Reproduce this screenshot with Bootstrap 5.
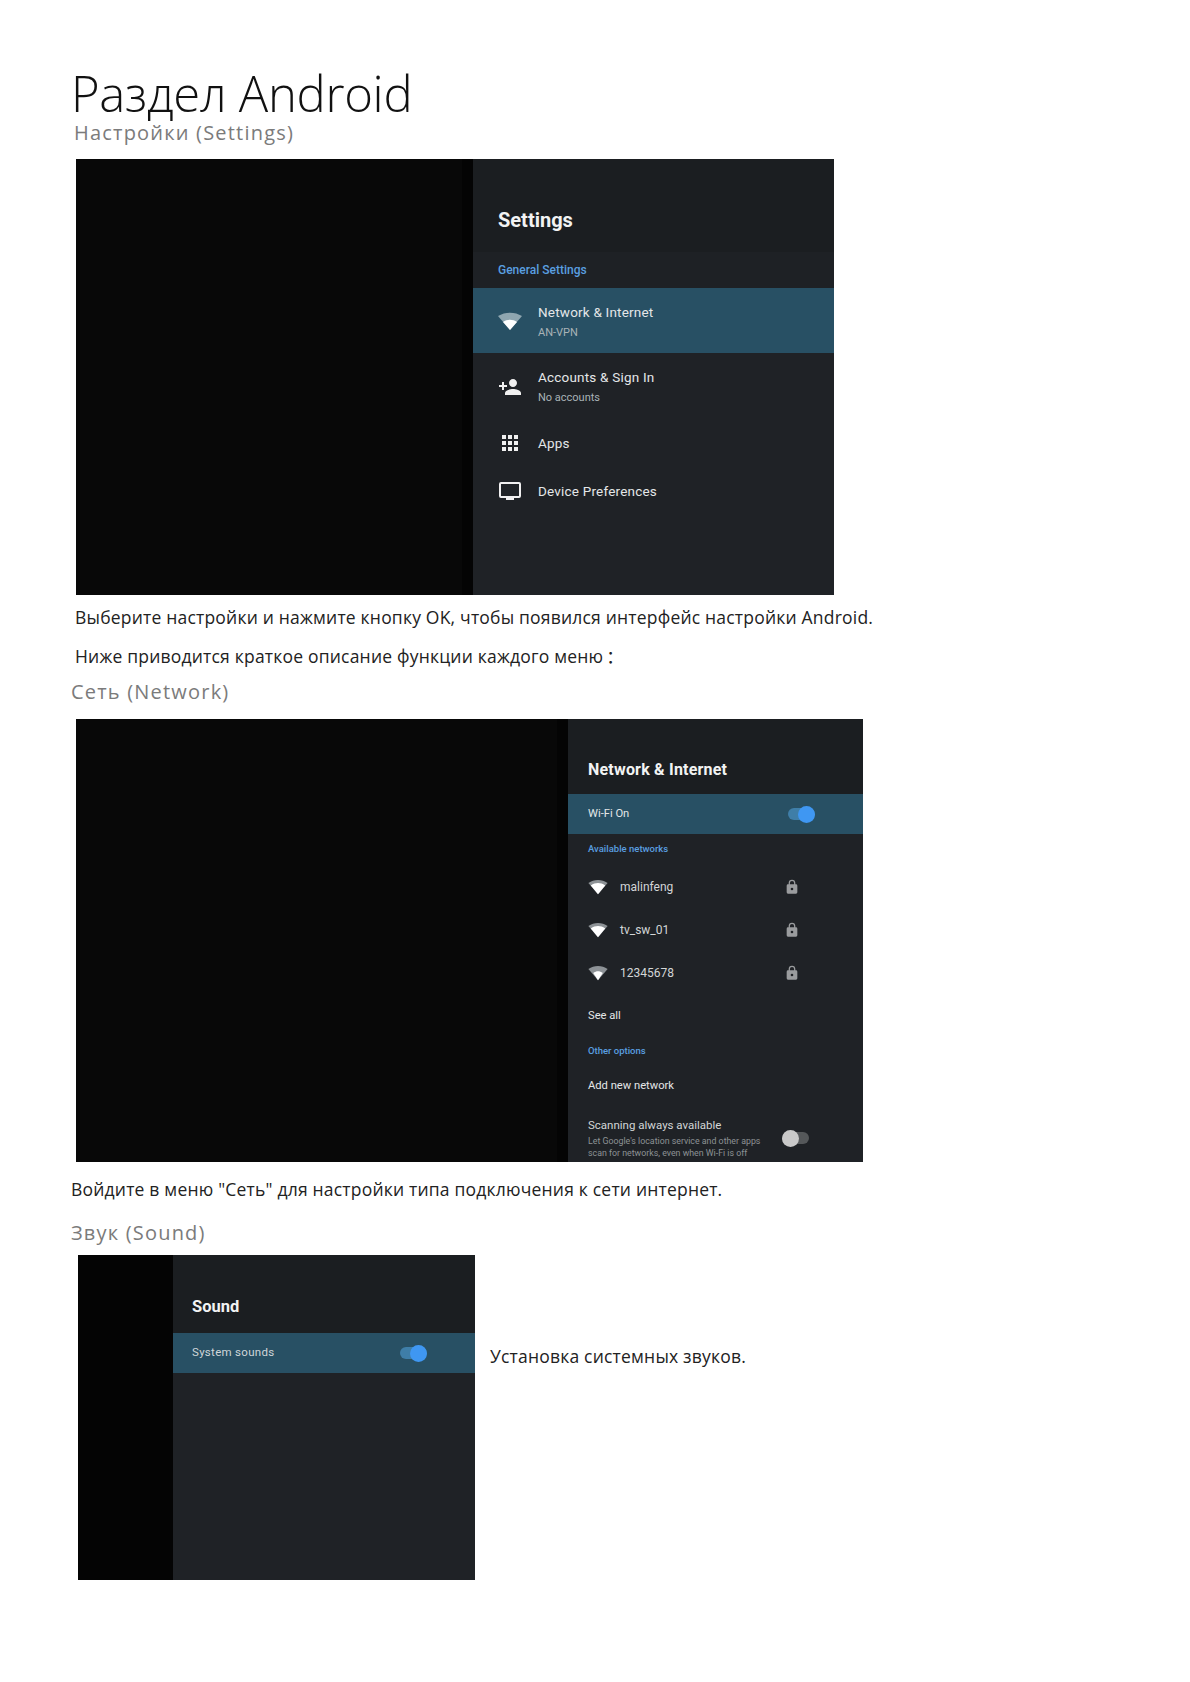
<!DOCTYPE html>
<html lang="ru">
<head>
  <meta charset="UTF-8">
  <title>Раздел Android</title>
  <link href="https://cdn.jsdelivr.net/npm/bootstrap@5.3.0/dist/css/bootstrap.min.css" rel="stylesheet">
  <style>
    body { background: #fff; margin: 0; font-family: "Open Sans", "Noto Sans", sans-serif; color: #1a1a1a; }
    .page { padding: 68px 0 0 71px; }
    .doc-title { font-family: "Open Sans", sans-serif; font-weight: 300; font-size: 49px; line-height: 50px; margin: 0; color: #111; letter-spacing: -0.3px; }
    .sec-head { font-size: 20px; line-height: 30px; font-weight: 400; color: #7b7b7b; letter-spacing: 1.2px; margin: 0; }
    .doc-text { font-size: 17.5px; line-height: 24px; margin: 0; letter-spacing: 0.2px; color: #222; }
    .cjk-colon { font-family: "Noto Sans CJK SC", sans-serif; padding-left: 3px; }

    .shot { display: flex; background: #080808; font-family: Roboto, sans-serif; color: #e4e7e8; }
    .shot-panel { background: #1f2226; flex-shrink: 0; box-shadow: -11px 0 0 #040404; }
    .shot-one { width: 758px; height: 436px; margin: 11px 0 0 5px; }
    .shot-one .shot-panel { width: 361px; }
    .shot-two { width: 787px; height: 443px; margin: 12px 0 0 5px; }
    .shot-two .shot-panel { width: 295px; }
    .shot-three { width: 397px; height: 325px; margin-left: 7px; flex-shrink: 0; background: #040404; }
    .shot-three .shot-panel { width: 302px; box-shadow: none; }

    .panel-head { background: #1b1e21; color: #f2f3f3; font-weight: 700; }
    .head-big { height: 93px; padding: 49px 0 0 25px; font-size: 20px; line-height: 24px; }
    .head-net { height: 75px; padding: 39px 0 0 20px; font-size: 16px; line-height: 24px; letter-spacing: 0.2px; }
    .head-snd { height: 78px; padding: 40px 0 0 19px; font-size: 16.5px; line-height: 24px; }
    .sel-row { background: #285064; }
    .blue-label { color: #5a9fe0; font-weight: 500; }

    .band { height: 36px; background: #1e2125; padding-left: 25px; font-size: 12px; }
    .menu-row { padding-left: 25px; }
    .menu-icon { width: 24px; height: 24px; margin-right: 16px; flex-shrink: 0; }
    .menu-title { font-size: 13.5px; line-height: 18px; letter-spacing: 0.2px; }
    .menu-sub { font-size: 11px; line-height: 16px; margin-top: 4px; color: #a9b3b7; }
    .pad-sel { padding-top: 3px; }
    .pad-acc { padding-bottom: 2px; }
    .h-65 { height: 65px; }
    .h-70 { height: 70px; }
    .h-40 { height: 40px; }
    .h-gap { height: 8px; }

    .net-row { padding: 0 20px; font-size: 11.2px; }
    .h-31 { height: 31px; }
    .h-43 { height: 43px; }
    .h-44 { height: 44px; }
    .h-42 { height: 42px; }
    .h-28 { height: 28px; }
    .small-blue { font-size: 9.5px; }
    .net-name { font-size: 12px; color: #d3d6d7; }
    .wifi-small { width: 20px; height: 16px; margin-right: 12px; flex-shrink: 0; }
    .lock-icon { width: 16px; height: 18px; margin-left: auto; margin-right: 43px; }
    .scan-row { padding: 10px 20px 0; }
    .scan-title { font-size: 11.5px; line-height: 16px; margin-bottom: 3px; color: #d3d6d7; }
    .scan-sub { font-size: 8.8px; line-height: 11.5px; color: #8d9295; }
    .snd-row { font-size: 11.5px; padding-left: 19px; letter-spacing: 0.3px; color: #cfd6d9; }

    .tog { width: 27px; height: 12px; border-radius: 6px; display: flex; align-items: center; flex-shrink: 0; }
    .tog span { width: 17px; height: 17px; border-radius: 50%; display: block; flex-shrink: 0; }
    .tog-on { background: #3f7ea8; justify-content: flex-end; margin-right: 28px; }
    .tog-on span { background: #3f97f2; }
    .tog-off { background: #55585a; margin-right: 34px; }
    .tog-off span { background: #c9c9c9; }
    .side-text { margin-left: 15px; padding-top: 89px; }
    .mt-10 { margin-top: 10px; }
    .mt-15 { margin-top: 15px; }
    .mt-9 { margin-top: 9px; }
    .mt-17 { margin-top: 17px; }
    .mt-7 { margin-top: 7px; }
    .ms-1px { margin-left: 3px; }
    .ms-4px { margin-left: 4px; }
  </style>
</head>
<body>
<div class="page">
  <h1 class="doc-title">Раздел Android</h1>
  <h2 class="sec-head ms-1px">Настройки (Settings)</h2>

  <div class="shot shot-one">
    <div class="shot-panel ms-auto">
      <div class="panel-head head-big">Settings</div>
      <div class="band d-flex align-items-center blue-label">General Settings</div>
      <div class="menu-row sel-row h-65 pad-sel d-flex align-items-center">
        <svg class="menu-icon" viewBox="0 0 24 24"><path d="M0 6C7 1.500 17 1.500 24 6L12 20Z" fill="#8fa6b0"/><path d="M5 12C9 9 15 9 19 12L12 20Z" fill="#fff"/></svg>
        <div>
          <div class="menu-title">Network &amp; Internet</div>
          <div class="menu-sub">AN-VPN</div>
        </div>
      </div>
      <div class="menu-row h-70 pad-acc d-flex align-items-center">
        <svg class="menu-icon" viewBox="0 0 24 24" fill="#f0f0f0"><path d="M15 12c2.210 0 4-1.790 4-4s-1.790-4-4-4-4 1.790-4 4 1.790 4 4 4zm-9-2V7H4v3H1v2h3v3h2v-3h3v-2H6zm9 4c-2.670 0-8 1.340-8 4v2h16v-2c0-2.660-5.330-4-8-4z"/></svg>
        <div>
          <div class="menu-title">Accounts &amp; Sign In</div>
          <div class="menu-sub">No accounts</div>
        </div>
      </div>
      <div class="menu-row h-40 d-flex align-items-center">
        <svg class="menu-icon" viewBox="0 0 24 24" fill="#f0f0f0"><path d="M4 4h4v4H4zM10 4h4v4h-4zM16 4h4v4h-4zM4 10h4v4H4zM10 10h4v4h-4zM16 10h4v4h-4zM4 16h4v4H4zM10 16h4v4h-4zM16 16h4v4h-4z"/></svg>
        <div class="menu-title">Apps</div>
      </div>
      <div class="h-gap"></div>
      <div class="menu-row h-40 d-flex align-items-center">
        <svg class="menu-icon" viewBox="0 0 24 24" fill="#f0f0f0"><path d="M3 3h18a2 2 0 0 1 2 2v12a2 2 0 0 1-2 2h-5v2H8v-2H3a2 2 0 0 1-2-2V5a2 2 0 0 1 2-2zm0 2v12h18V5z"/></svg>
        <div class="menu-title">Device Preferences</div>
      </div>
    </div>
  </div>

  <p class="doc-text mt-10 ms-4px">Выберите настройки и нажмите кнопку OK, чтобы появился интерфейс настройки Android.</p>
  <p class="doc-text mt-15 ms-4px">Ниже приводится краткое описание функции каждого меню<span class="cjk-colon">：</span></p>
  <h2 class="sec-head mt-9">Сеть (Network)</h2>

  <div class="shot shot-two">
    <div class="shot-panel ms-auto">
      <div class="panel-head head-net">Network &amp; Internet</div>
      <div class="net-row sel-row h-40 d-flex align-items-center justify-content-between">
        <span>Wi-Fi On</span>
        <div class="tog tog-on"><span></span></div>
      </div>
      <div class="net-row h-31 d-flex align-items-center blue-label small-blue">Available networks</div>
      <div class="net-row h-43 d-flex align-items-center net-name">
        <svg class="wifi-small" viewBox="0 0 24 20"><path d="M0 5C7 0 17 0 24 5L12 19Z" fill="#8d9296"/><path d="M3 8C9 4 15 4 21 8L12 19Z" fill="#fff"/></svg>
        <span>malinfeng</span>
        <svg class="lock-icon" viewBox="0 0 24 24" fill="#9a9c9e"><path d="M18 8h-1V6A5 5 0 0 0 7 6v2H6a2 2 0 0 0-2 2v10a2 2 0 0 0 2 2h12a2 2 0 0 0 2-2V10a2 2 0 0 0-2-2zm-6 9a2 2 0 1 1 0-4 2 2 0 0 1 0 4zm3.100-9H8.900V6a3.100 3.100 0 0 1 6.200 0z"/></svg>
      </div>
      <div class="net-row h-43 d-flex align-items-center net-name">
        <svg class="wifi-small" viewBox="0 0 24 20"><path d="M0 5C7 0 17 0 24 5L12 19Z" fill="#8d9296"/><path d="M3 8C9 4 15 4 21 8L12 19Z" fill="#fff"/></svg>
        <span>tv_sw_01</span>
        <svg class="lock-icon" viewBox="0 0 24 24" fill="#9a9c9e"><path d="M18 8h-1V6A5 5 0 0 0 7 6v2H6a2 2 0 0 0-2 2v10a2 2 0 0 0 2 2h12a2 2 0 0 0 2-2V10a2 2 0 0 0-2-2zm-6 9a2 2 0 1 1 0-4 2 2 0 0 1 0 4zm3.100-9H8.900V6a3.100 3.100 0 0 1 6.200 0z"/></svg>
      </div>
      <div class="net-row h-44 d-flex align-items-center net-name">
        <svg class="wifi-small" viewBox="0 0 24 20"><path d="M0 5C7 0 17 0 24 5L12 19Z" fill="#8d9296"/><path d="M6 10C10 7 14 7 18 10L12 19Z" fill="#fff"/></svg>
        <span>12345678</span>
        <svg class="lock-icon" viewBox="0 0 24 24" fill="#9a9c9e"><path d="M18 8h-1V6A5 5 0 0 0 7 6v2H6a2 2 0 0 0-2 2v10a2 2 0 0 0 2 2h12a2 2 0 0 0 2-2V10a2 2 0 0 0-2-2zm-6 9a2 2 0 1 1 0-4 2 2 0 0 1 0 4zm3.100-9H8.900V6a3.100 3.100 0 0 1 6.200 0z"/></svg>
      </div>
      <div class="net-row h-42 d-flex align-items-center">See all</div>
      <div class="net-row h-28 d-flex align-items-center blue-label small-blue">Other options</div>
      <div class="net-row h-42 d-flex align-items-center">Add new network</div>
      <div class="scan-row d-flex align-items-center justify-content-between">
        <div>
          <div class="scan-title">Scanning always available</div>
          <div class="scan-sub">Let Google's location service and other apps<br>scan for networks, even when Wi-Fi is off</div>
        </div>
        <div class="tog tog-off"><span></span></div>
      </div>
    </div>
  </div>

  <p class="doc-text mt-15">Войдите в меню "Сеть" для настройки типа подключения к сети интернет.</p>
  <h2 class="sec-head mt-17">Звук (Sound)</h2>

  <div class="d-flex mt-7">
    <div class="shot shot-three">
      <div class="shot-panel ms-auto">
        <div class="panel-head head-snd">Sound</div>
        <div class="net-row snd-row sel-row h-40 d-flex align-items-center justify-content-between">
          <span>System sounds</span>
          <div class="tog tog-on"><span></span></div>
        </div>
      </div>
    </div>
    <p class="doc-text side-text">Установка системных звуков.</p>
  </div>
</div>
<script src="https://cdn.jsdelivr.net/npm/bootstrap@5.3.0/dist/js/bootstrap.bundle.min.js"></script>
</body>
</html>
